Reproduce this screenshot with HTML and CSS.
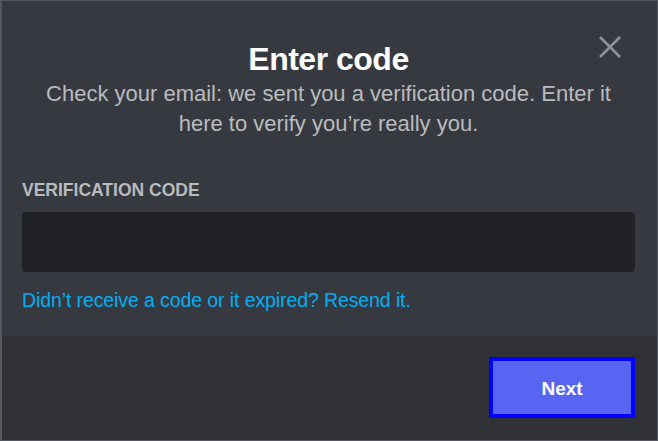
FILE: index.html
```html
<!DOCTYPE html>
<html lang="en">
<head>
<meta charset="utf-8">
<title>Enter code</title>
<link rel="stylesheet" href="styles.css">
</head>
<body>
<div class="modal">
  <button class="close" aria-label="Close">
    <svg width="24" height="24" viewBox="0 0 24 24"><path d="M2 2 L22 22 M22 2 L2 22" stroke="currentColor" stroke-width="2.6" fill="none"/></svg>
  </button>
  <div class="content">
    <h1 class="title">Enter code</h1>
    <p class="subtitle">Check your email: we sent you a verification code. Enter it here to verify you’re really you.</p>
    <label class="label" for="code">Verification code</label>
    <input class="input" id="code" type="text">
    <a class="link" href="#">Didn’t receive a code or it expired? Resend it.</a>
  </div>
  <div class="footer">
    <button class="next">Next</button>
  </div>
</div>
</body>
</html>
```

FILE: styles.css
```css
html, body {
  margin: 0;
  padding: 0;
  height: 100%;
}
body {
  background: #36393f;
  font-family: "Liberation Sans", Arial, sans-serif;
}
.modal {
  position: relative;
  box-sizing: border-box;
  height: 441px;
  display: flex;
  flex-direction: column;
  background: #36393f;
  border: 1px solid #55585e;
  border-left-width: 2px;
}
.close {
  position: absolute;
  top: 34px;
  right: 35px;
  width: 24px;
  height: 24px;
  padding: 0;
  border: 0;
  background: none;
  color: #8e9297;
  display: flex;
}
.content {
  flex: 1;
  display: flex;
  flex-direction: column;
  padding: 38px 22px 0 20px;
}
.title {
  margin: 0;
  text-align: center;
  color: #ffffff;
  font-size: 32px;
  line-height: 40px;
  font-weight: bold;
  letter-spacing: -0.5px;
}
.subtitle {
  margin: 0 auto;
  width: 600px;
  text-align: center;
  color: #b9bbbe;
  font-size: 22px;
  line-height: 30px;
}
.label {
  margin-top: 40px;
  color: #b9bbbe;
  font-size: 17.5px;
  line-height: 22px;
  font-weight: bold;
  text-transform: uppercase;
}
.input {
  margin-top: 11px;
  height: 60px;
  box-sizing: border-box;
  border: 0;
  border-radius: 4px;
  background: #202225;
  outline: none;
}
.link {
  margin-top: 17px;
  color: #00aff4;
  font-size: 19.5px;
  line-height: 22px;
  text-decoration: none;
  letter-spacing: -0.1px;
}
.footer {
  height: 104px;
  background: #2f3136;
  display: flex;
  justify-content: flex-end;
  align-items: flex-start;
  padding: 21px 22px 0 0;
  box-sizing: border-box;
}
.next {
  width: 146px;
  height: 61px;
  box-sizing: border-box;
  border: 4px solid #0000ff;
  background: #5865f2;
  color: #ffffff;
  font-family: "Liberation Sans", Arial, sans-serif;
  font-size: 19px;
  font-weight: bold;
  padding: 2px 0 0;
}
```
